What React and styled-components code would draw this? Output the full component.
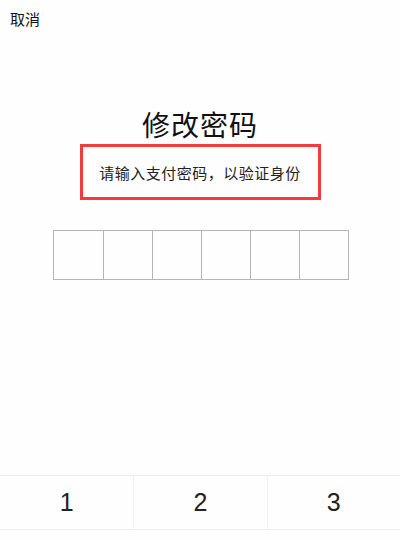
import React from "react";
import styled, { createGlobalStyle } from "styled-components";

const Global = createGlobalStyle`
  html, body { margin: 0; padding: 0; background: #fefefe; }
  body { font-family: "Noto Sans CJK SC", "Liberation Sans", sans-serif; }
`;

const Page = styled.div`
  width: 400px;
  height: 540px;
  display: flex;
  flex-direction: column;
  overflow: hidden;
  background: #fefefe;
`;

const TopBar = styled.div`
  height: 36px;
  display: flex;
  align-items: center;
  padding-left: 10px;
`;

const Cancel = styled.span`
  font-size: 15px;
  color: #111;
  line-height: 1;
`;

const Title = styled.h1`
  margin: 70px 0 0;
  font-size: 28px;
  font-weight: 400;
  color: #111;
  text-align: center;
  line-height: 36px;
  letter-spacing: 1px;
`;

const Highlight = styled.div`
  align-self: center;
  margin-top: 2px;
  width: 241px;
  height: 56px;
  box-sizing: border-box;
  border: 3px solid #f23b3b;
  display: flex;
  align-items: center;
  justify-content: center;
`;

const Sub = styled.span`
  font-size: 15px;
  color: #222;
  letter-spacing: 0.5px;
`;

const PinRow = styled.div`
  align-self: center;
  margin-top: 30px;
  margin-left: 2px;
  display: grid;
  grid-template-columns: repeat(6, 49px);
  height: 48px;
  border: 1px solid #b4b4b4;
  box-sizing: content-box;
`;

const PinCell = styled.div`
  border-left: ${(p) => (p.$first ? "none" : "1px solid #b4b4b4")};
`;

const Spacer = styled.div`
  flex: 1;
`;

const Keypad = styled.div`
  display: grid;
  grid-template-columns: repeat(3, 1fr);
  border-top: 1px solid #ededed;
  height: 53px;
  border-bottom: 1px solid #ededed;
  margin-bottom: 10px;
`;

const Key = styled.div`
  display: flex;
  align-items: center;
  justify-content: center;
  font-family: "Liberation Sans", sans-serif;
  font-size: 25px;
  color: #222;
  border-left: ${(p) => (p.$first ? "none" : "1px solid #f0f0f0")};
`;

export default function App() {
  return (
    <Page>
      <Global />
      <TopBar>
        <Cancel>取消</Cancel>
      </TopBar>
      <Title>修改密码</Title>
      <Highlight>
        <Sub>请输入支付密码，以验证身份</Sub>
      </Highlight>
      <PinRow>
        {[0, 1, 2, 3, 4, 5].map((i) => (
          <PinCell key={i} $first={i === 0} />
        ))}
      </PinRow>
      <Spacer />
      <Keypad>
        {["1", "2", "3"].map((k, i) => (
          <Key key={k} $first={i === 0}>
            {k}
          </Key>
        ))}
      </Keypad>
    </Page>
  );
}
